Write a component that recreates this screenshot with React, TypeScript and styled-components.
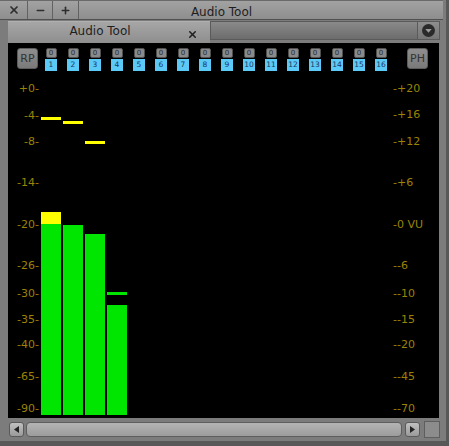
import styled, { createGlobalStyle } from 'styled-components';
import { X, Minus, Plus } from 'lucide-react';

const GlobalStyle = createGlobalStyle`
  html, body { margin: 0; padding: 0; background: #585858; }
  body { width: 449px; height: 446px; overflow: hidden; font-family: "DejaVu Sans", Verdana, sans-serif; }
`;

const CHART_TOP = 76;

const leftScale = [
  { t: '+0-', y: 89 }, { t: '-4-', y: 116 }, { t: '-8-', y: 142 }, { t: '-14-', y: 183 },
  { t: '-20-', y: 225 }, { t: '-26-', y: 266 }, { t: '-30-', y: 294 }, { t: '-35-', y: 320 },
  { t: '-40-', y: 345 }, { t: '-65-', y: 377 }, { t: '-90-', y: 409 },
];
const rightScale = [
  { t: '-+20', y: 89 }, { t: '-+16', y: 115 }, { t: '-+12', y: 142 }, { t: '-+6', y: 183 },
  { t: '-0 VU', y: 225 }, { t: '--6', y: 266 }, { t: '--10', y: 294 }, { t: '--15', y: 320 },
  { t: '--20', y: 345 }, { t: '--45', y: 377 }, { t: '--70', y: 409 },
];
const bars = [
  { green: 191, yellow: 12, peak: 117, peakColor: '#ffff00' },
  { green: 190, yellow: 0, peak: 121, peakColor: '#ffff00' },
  { green: 181, yellow: 0, peak: 141, peakColor: '#ffff00' },
  { green: 110, yellow: 0, peak: 292, peakColor: '#00e600' },
];
const channels = Array.from({ length: 16 }, (_, i) => i + 1);

const App = () => (
  <>
    <GlobalStyle />
    <Window>
      <TitleBar>
        <WinButtons>
          <WinButton $w={27}><X size={12} strokeWidth={3.4} /></WinButton>
          <WinButton $w={24}><Minus size={11} strokeWidth={3.4} /></WinButton>
          <WinButton $w={25}><Plus size={11} strokeWidth={3.4} /></WinButton>
        </WinButtons>
        <Title>Audio Tool</Title>
      </TitleBar>
      <TabRow>
        <Tab>
          <TabLabel>Audio Tool</TabLabel>
          <TabClose><X size={11} strokeWidth={3.4} /></TabClose>
        </Tab>
        <TabFill>
          <MenuButton>
            <svg width="13" height="13" viewBox="0 0 13 13">
              <circle cx="6.5" cy="6.5" r="6.5" fill="#2a2a2a" />
              <path d="M3.3 5 L9.7 5 L6.5 8.8 Z" fill="#9a9a9a" />
            </svg>
          </MenuButton>
        </TabFill>
      </TabRow>
      <Panel>
        <Controls>
          <SideButton>RP</SideButton>
          <Channels>
            {channels.map((n) => (
              <Channel key={n}>
                <Arm>0</Arm>
                <ChanNum>{n}</ChanNum>
              </Channel>
            ))}
          </Channels>
          <SideButton>PH</SideButton>
        </Controls>
        <Chart>
          <Scale>
            {leftScale.map((l) => (
              <Label key={l.t} $align="right" style={{ top: l.y - CHART_TOP - 7 }}>{l.t}</Label>
            ))}
          </Scale>
          <Bars>
            {bars.map((b, i) => (
              <BarCol key={i}>
                <Peak style={{ top: b.peak - CHART_TOP, background: b.peakColor }} />
                {b.yellow > 0 && <Fill $color="#ffff00" style={{ height: b.yellow }} />}
                <Fill $color="#00e600" style={{ height: b.green }} />
              </BarCol>
            ))}
          </Bars>
          <Scale>
            {rightScale.map((l) => (
              <Label key={l.t} $align="left" style={{ top: l.y - CHART_TOP - 7 }}>{l.t}</Label>
            ))}
          </Scale>
        </Chart>
      </Panel>
      <ScrollRow>
        <ArrowButton>
          <svg width="5" height="7" viewBox="0 0 5 7"><path d="M5 0 L0 3.5 L5 7 Z" fill="#222" /></svg>
        </ArrowButton>
        <Track />
        <ArrowButton>
          <svg width="5" height="7" viewBox="0 0 5 7"><path d="M0 0 L5 3.5 L0 7 Z" fill="#222" /></svg>
        </ArrowButton>
        <Corner />
      </ScrollRow>
    </Window>
  </>
);

const Window = styled.div`
  width: 446px;
  height: 441px;
  background: #7c7c7c;
  display: flex;
  flex-direction: column;
`;
const TitleBar = styled.div`
  display: grid;
  height: 18px;
  width: 443px;
  background: linear-gradient(#a2a2a2, #8e8e8e);
  border-top: 1px solid #6a6a6a;
  border-bottom: 1px solid #505050;
  > * { grid-area: 1 / 1; }
`;
const WinButtons = styled.div`
  display: flex;
`;
const WinButton = styled.div<{ $w: number }>`
  width: ${({ $w }) => $w}px;
  display: flex;
  align-items: center;
  justify-content: center;
  border-right: 1px solid #626262;
  color: #2e2e2e;
`;
const Title = styled.div`
  justify-self: center;
  align-self: center;
  padding-top: 3px;
  font-size: 12px;
  color: #1e1e1e;
`;
const TabRow = styled.div`
  display: flex;
  height: 22px;
  margin-top: 1px;
  padding-left: 8px;
`;
const Tab = styled.div`
  width: 202px;
  display: flex;
  align-items: center;
  background: linear-gradient(#a6a6a6, #8e8e8e);
  border-top: 1px solid #b0b0b0;
`;
const TabLabel = styled.div`
  flex: 1;
  text-align: center;
  font-size: 12px;
  color: #1e1e1e;
  padding-left: 5px;
  margin-top: -4px;
`;
const TabClose = styled.div`
  display: flex;
  color: #222;
  margin-right: 12px;
  margin-top: 4px;
`;
const TabFill = styled.div`
  width: 230px;
  height: 19px;
  display: flex;
  justify-content: flex-end;
  background: linear-gradient(#8a8a8a, #6c6c6c);
  border: 1px solid #5a5a5a;
  box-sizing: border-box;
`;
const MenuButton = styled.div`
  width: 21px;
  display: flex;
  align-items: center;
  justify-content: center;
  border-left: 1px solid #5a5a5a;
  background: linear-gradient(#8e8e8e, #767676);
`;
const Panel = styled.div`
  margin-left: 8px;
  width: 431px;
  height: 375px;
  background: #000;
  display: flex;
  flex-direction: column;
`;
const Controls = styled.div`
  display: flex;
  align-items: flex-start;
  padding: 5px 11px 0 9px;
  height: 28px;
`;
const SideButton = styled.div`
  width: 21px;
  height: 21px;
  box-sizing: border-box;
  border: 1px solid #5c5c5c;
  border-radius: 3px;
  background: linear-gradient(#8e8e8e, #7a7a7a);
  color: #333;
  font-size: 11px;
  display: flex;
  align-items: center;
  justify-content: center;
`;
const Channels = styled.div`
  display: flex;
  gap: 10px;
  margin-left: 7px;
  margin-right: auto;
`;
const Channel = styled.div`
  width: 12px;
  display: flex;
  flex-direction: column;
  align-items: center;
  gap: 1px;
`;
const Arm = styled.div`
  width: 11px;
  height: 10px;
  box-sizing: border-box;
  border: 1px solid #505050;
  border-radius: 2px;
  background: #8a8a8a;
  color: #2a2a2a;
  font-size: 7px;
  line-height: 8px;
  text-align: center;
`;
const ChanNum = styled.div`
  width: 12px;
  height: 12px;
  background: #5ccaf6;
  color: #1b3560;
  font-size: 7.5px;
  line-height: 12px;
  text-align: center;
`;
const Chart = styled.div`
  flex: 1;
  display: grid;
  grid-template-columns: 33px 352px 46px;
`;
const Scale = styled.div`
  position: relative;
`;
const Label = styled.div<{ $align: 'left' | 'right' }>`
  position: absolute;
  ${({ $align }) => ($align === 'right' ? 'right: 2px;' : 'left: 0;')}
  height: 14px;
  line-height: 14px;
  font-size: 11px;
  color: #9a8306;
  white-space: nowrap;
`;
const Bars = styled.div`
  display: flex;
  align-items: stretch;
  gap: 2px;
  padding-bottom: 3px;
`;
const BarCol = styled.div`
  width: 20px;
  position: relative;
  display: flex;
  flex-direction: column;
  justify-content: flex-end;
`;
const Fill = styled.div<{ $color: string }>`
  background: ${({ $color }) => $color};
`;
const Peak = styled.div`
  position: absolute;
  left: 0;
  right: 0;
  height: 3px;
`;
const ScrollRow = styled.div`
  display: flex;
  align-items: center;
  gap: 2px;
  padding: 3px 0 0 9px;
  height: 17px;
`;
const ArrowButton = styled.div`
  width: 15px;
  height: 15px;
  box-sizing: border-box;
  border: 1px solid #5a5a5a;
  border-radius: 3px;
  background: linear-gradient(#c0c0c0, #9a9a9a);
  display: flex;
  align-items: center;
  justify-content: center;
`;
const Track = styled.div`
  width: 376px;
  height: 15px;
  box-sizing: border-box;
  border: 1px solid #5e5e5e;
  border-radius: 4px;
  background: linear-gradient(#b4b4b4, #9c9c9c);
  margin-right: 1px;
`;
const Corner = styled.div`
  width: 16px;
  height: 17px;
  margin-left: 2px;
  box-sizing: border-box;
  border: 1px solid #5e5e5e;
  background: #8c8c8c;
`;

export default App;
